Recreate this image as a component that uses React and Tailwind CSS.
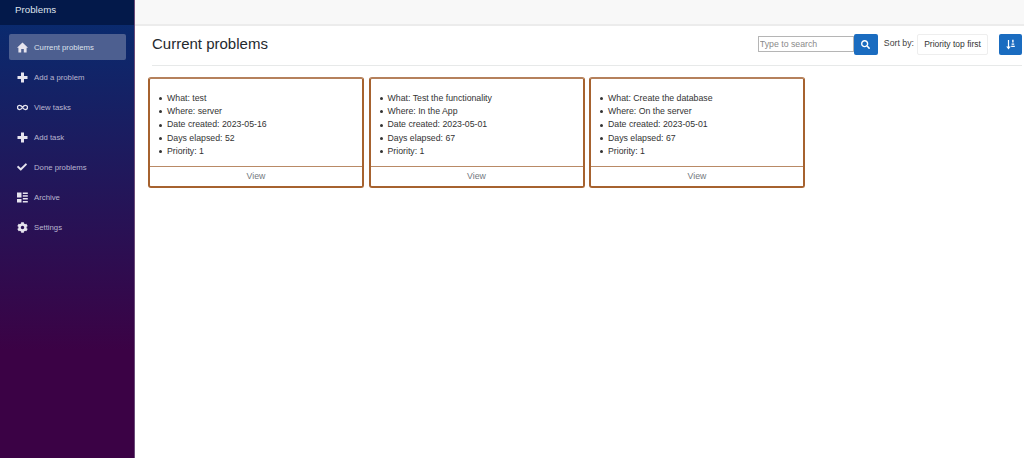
import React from "react";
import { FaCog, FaSearch, FaCheck } from "react-icons/fa";

const HomeIcon = () => (
  <svg width="11" height="11" viewBox="0 0 11 11" fill="currentColor">
    <path d="M5.5 0.5 L11 5.8 L9.6 5.8 L9.6 10.5 L6.8 10.5 L6.8 7 L4.2 7 L4.2 10.5 L1.4 10.5 L1.4 5.8 L0 5.8 Z" />
  </svg>
);

const PlusIcon = () => (
  <svg width="11" height="11" viewBox="0 0 11 11" fill="currentColor">
    <path d="M4 0.5 H7 V4 H10.5 V7 H7 V10.5 H4 V7 H0.5 V4 H4 Z" />
  </svg>
);

const InfinityIcon = () => (
  <svg width="11" height="11" viewBox="0 0 11 11" fill="none" stroke="currentColor" strokeWidth="1.3">
    <path d="M5.5 5.5 C4.5 3.8 3.6 3.4 2.6 3.4 A2.1 2.1 0 0 0 2.6 7.6 C3.6 7.6 4.5 7.2 5.5 5.5 C6.5 3.8 7.4 3.4 8.4 3.4 A2.1 2.1 0 0 1 8.4 7.6 C7.4 7.6 6.5 7.2 5.5 5.5 Z" />
  </svg>
);

const ArchiveIcon = () => (
  <svg width="11" height="11" viewBox="0 0 11 11" fill="currentColor">
    <rect x="0" y="0.5" width="4.5" height="5" />
    <rect x="0" y="7" width="4.5" height="3.5" />
    <rect x="5.8" y="0.5" width="5" height="1.5" />
    <rect x="5.8" y="3.2" width="5" height="1.5" />
    <rect x="5.8" y="6" width="5" height="1.5" />
    <rect x="5.8" y="9" width="5" height="1.5" />
  </svg>
);

const SortIcon = () => (
  <svg width="11" height="11" viewBox="0 0 11 11" fill="currentColor">
    <path d="M2.9 1 H4.1 V7.5 H5.8 L3.5 10.5 L1.2 7.5 H2.9 Z" />
    <path d="M7.2 0.8 H8.6 V3.4 H7.2 Z M6.6 4.6 H9.2 V5.7 H6.6 Z M6.2 6.8 H9.8 V7.9 H6.2 Z" />
  </svg>
);

const nav = [
  ["Current problems", <HomeIcon />, true],
  ["Add a problem", <PlusIcon />],
  ["View tasks", <InfinityIcon />],
  ["Add task", <PlusIcon />],
  ["Done problems", <FaCheck size={10} />],
  ["Archive", <ArchiveIcon />],
  ["Settings", <FaCog size={11} />],
];

const cards = [
  ["test", "server", "2023-05-16", "52"],
  ["Test the functionality", "In the App", "2023-05-01", "67"],
  ["Create the database", "On the server", "2023-05-01", "67"],
];

const Row = ({ children }) => (
  <li className="flex items-center gap-[5px]">
    <span className="size-[3px] shrink-0 rounded-full bg-[#333]" />
    <span>{children}</span>
  </li>
);

export default function App() {
  return (
    <div className="flex h-[458px] w-[1024px] overflow-hidden bg-white font-['Liberation_Sans',Arial,sans-serif]">
      <aside className="flex w-[135px] shrink-0 flex-col border-r border-[#6b4b78] bg-[linear-gradient(180deg,#0a2a6e_25px,#3b0245_350px)]">
        <div className="h-[25px] bg-[#03194a] pl-[15px] pt-[3px] text-[9.75px] leading-[14px] text-[#dfe3ec]">Problems</div>
        <nav className="mt-[9px] flex flex-col gap-[4px] pl-[9px] pr-[8px]">
          {nav.map(([label, icon, active]) => (
            <div
              key={label}
              className={`flex h-[26px] items-center rounded-[2px] pl-[8px] text-[7.75px] ${active ? "bg-[#4d5f90] text-[#dde1ec]" : "text-[#b9b6d0]"}`}
            >
              <span className="flex w-[17px] shrink-0 justify-start text-[#e6e4ee]">{icon}</span>
              <span className="pt-[1px]">{label}</span>
            </div>
          ))}
        </nav>
      </aside>

      <main className="min-w-0 flex-1">
        <div className="h-[26px] border-b-2 border-[#ececec] bg-[#f8f8f8]" />
        <div className="ml-[17px] mr-[2px] flex h-[40px] items-center justify-between border-b border-[#e7e9e9] pb-[3px]">
          <h1 className="text-[15px] font-normal text-[#24292e]">Current problems</h1>
          <div className="flex items-center text-[8.75px] text-[#444]">
            <input
              placeholder="Type to search"
              className="h-[16px] w-[96px] border border-[#b5b5b5] pl-[1px] text-[8.75px] outline-none placeholder:text-[#8a8a8a]"
            />
            <button className="flex h-[21px] w-[24px] items-center justify-center rounded-[2px] bg-[#1a6cc0] text-white">
              <FaSearch size={9} />
            </button>
            <span className="ml-[6px]">Sort by:</span>
            <button className="ml-[3px] flex h-[21px] w-[71px] items-center justify-center rounded-[2px] border border-[#eeeeee] text-[8.5px] text-[#333]">
              Priority top first
            </button>
            <button className="ml-[11px] flex h-[21px] w-[23px] items-center justify-center rounded-[2px] bg-[#1a6cc0] text-white">
              <SortIcon />
            </button>
          </div>
        </div>

        <div className="ml-[13px] mt-[11px] flex gap-[4.5px]">
          {cards.map(([what, where, date, days]) => (
            <div key={what} className="flex h-[111px] w-[216px] flex-col rounded-[3px] border-2 border-[#a6622f] border-t-[#b5815c]">
              <ul className="flex-1 pl-[9px] pt-[13px] text-[8.75px] leading-[13.2px] text-[#333]">
                <Row>What: {what}</Row>
                <Row>Where: {where}</Row>
                <Row>Date created: {date}</Row>
                <Row>Days elapsed: {days}</Row>
                <Row>Priority: 1</Row>
              </ul>
              <div className="flex h-[20px] items-center justify-center border-t border-[#b98a66] pt-[1px] text-[8.75px] text-[#72787e]">View</div>
            </div>
          ))}
        </div>
      </main>
    </div>
  );
}
